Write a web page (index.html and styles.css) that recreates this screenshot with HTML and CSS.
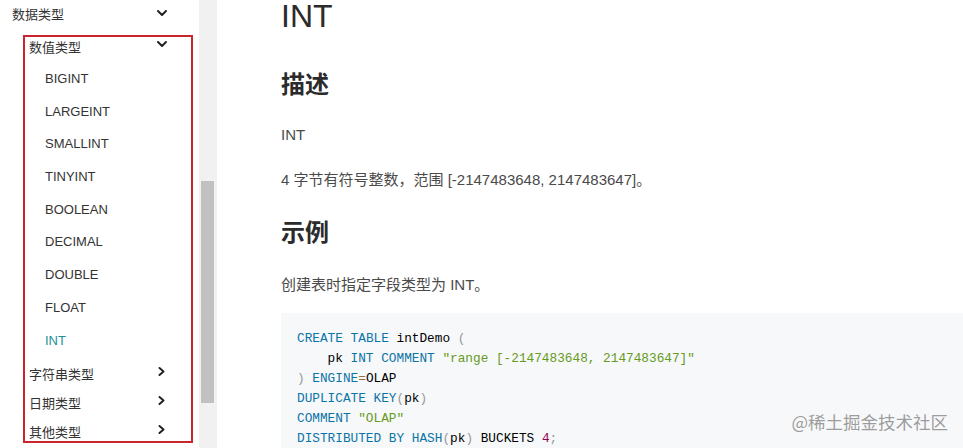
FILE: index.html
```html
<!DOCTYPE html>
<html lang="zh">
<head>
<meta charset="utf-8">
<title>INT</title>
<link rel="stylesheet" href="styles.css">
</head>
<body>
<div class="page">
  <aside class="sidebar">
    <div class="cat top"><span>数据类型</span>
      <svg class="chev-down" width="10" height="6" viewBox="0 0 10 6"><polyline points="1,1 5,5 9,1"/></svg>
    </div>
    <ul class="group">
      <li class="cat sub first"><span>数值类型</span>
        <svg class="chev-down" width="10" height="6" viewBox="0 0 10 6"><polyline points="1,1 5,5 9,1"/></svg>
      </li>
      <li class="leaf lead">BIGINT</li>
      <li class="leaf">LARGEINT</li>
      <li class="leaf">SMALLINT</li>
      <li class="leaf">TINYINT</li>
      <li class="leaf">BOOLEAN</li>
      <li class="leaf">DECIMAL</li>
      <li class="leaf">DOUBLE</li>
      <li class="leaf">FLOAT</li>
      <li class="leaf active">INT</li>
      <li class="cat sub closed after-leaf"><span>字符串类型</span>
        <svg class="chev-right" width="7" height="9" viewBox="0 0 7 9"><polyline points="1.5,1 5.5,4.5 1.5,8"/></svg>
      </li>
      <li class="cat sub closed"><span>日期类型</span>
        <svg class="chev-right" width="7" height="9" viewBox="0 0 7 9"><polyline points="1.5,1 5.5,4.5 1.5,8"/></svg>
      </li>
      <li class="cat sub closed"><span>其他类型</span>
        <svg class="chev-right" width="7" height="9" viewBox="0 0 7 9"><polyline points="1.5,1 5.5,4.5 1.5,8"/></svg>
      </li>
    </ul>
  </aside>
  <div class="scrollbar"><div class="thumb"></div></div>
  <main class="content">
    <h1 class="title">INT</h1>
    <h2 class="heading h-desc">描述</h2>
    <p class="para p-first">INT</p>
    <p class="para p-next">4 字节有符号整数，范围 [-2147483648, 2147483647]。</p>
    <h2 class="heading h-example">示例</h2>
    <p class="para p-example">创建表时指定字段类型为 INT。</p>
<pre class="code"><code><span class="kw">CREATE</span> <span class="kw">TABLE</span> intDemo <span class="pu">(</span>
    pk <span class="kw">INT</span> <span class="kw">COMMENT</span> <span class="st">"range [-2147483648, 2147483647]"</span>
<span class="pu">)</span> <span class="kw">ENGINE</span><span class="op">=</span>OLAP
<span class="kw">DUPLICATE</span> <span class="kw">KEY</span><span class="pu">(</span>pk<span class="pu">)</span>
<span class="kw">COMMENT</span> <span class="st">"OLAP"</span>
<span class="kw">DISTRIBUTED</span> <span class="kw">BY</span> <span class="kw">HASH</span><span class="pu">(</span>pk<span class="pu">)</span> BUCKETS <span class="nu">4</span><span class="pu">;</span></code></pre>
  </main>
  <div class="watermark">@稀土掘金技术社区</div>
</div>
</body>
</html>
```

FILE: styles.css
```css
* { box-sizing: border-box; }
html, body {
  margin: 0;
  padding: 0;
  height: 448px;
  overflow: hidden;
  background: #fff;
}
body {
  font-family: "Liberation Sans", "Noto Sans CJK SC", sans-serif;
  color: #333;
}
.page {
  position: relative;
  display: flex;
  height: 448px;
}

/* Sidebar */
.sidebar {
  width: 199px;
  flex: 0 0 199px;
  font-size: 13px;
  color: #333;
}
.cat {
  display: flex;
  align-items: center;
}
.cat svg { margin-left: auto; fill: none; stroke: #1f1f1f; stroke-width: 1.9; stroke-linecap: round; stroke-linejoin: round; }
.top {
  height: 27px;
  padding-left: 12px;
  padding-right: 32.5px;
}
.top svg { margin-top: -2px; }
.group {
  list-style: none;
  margin: 8px 0 0 23px;
  padding: 0;
  width: 170px;
  border: 2px solid #c9252f;
}
.sub {
  height: 20px;
  padding-left: 4px;
  padding-right: 24.5px;
}
.sub.first { height: 18px; }
.sub.first svg { margin-top: -4px; }
.sub.closed { padding-right: 26px; margin-top: 9px; }
.sub.closed svg { margin-top: -4px; }
.sub.after-leaf { margin-top: 6px; }
.leaf {
  height: 32.7px;
  line-height: 32.7px;
  padding-left: 20px;
}
.leaf.lead { margin-top: 8px; }
.leaf.active { color: #20909b; }

/* Scrollbar */
.scrollbar {
  flex: 0 0 18px;
  width: 18px;
  background: #f1f1f1;
  padding-top: 181px;
  padding-left: 2px;
}
.thumb {
  width: 13px;
  height: 222px;
  background: #c1c1c1;
}

/* Content */
.content {
  flex: 1;
  min-width: 0;
  padding-left: 64px;
  display: flex;
  flex-direction: column;
}
.title {
  margin: 0;
  font-size: 32px;
  line-height: 32px;
  font-weight: 400;
  color: #2b2b2b;
}
.heading {
  margin: 0;
  font-size: 24px;
  line-height: 32px;
  font-weight: 700;
  color: #2b2b2b;
}
.h-desc { margin-top: 37px; }
.h-example { margin-top: 24.5px; }
.para {
  margin: 0;
  font-size: 15px;
  line-height: 24px;
  color: #4a4a4a;
}
.p-first { margin-top: 21.5px; }
.p-next { margin-top: 21.5px; }
.p-example { margin-top: 24.5px; }

.code {
  margin: 16px 0 0 0;
  padding: 16px;
  background: #f6f8fa;
  font-family: "Liberation Mono", "DejaVu Sans Mono", monospace;
  font-size: 12.75px;
  line-height: 20px;
  color: #000;
  white-space: pre;
  flex: 1;
}
.code code { font-family: inherit; }
.kw { color: #0b74a6; }
.st { color: #679a1c; }
.pu { color: #999; }
.op { color: #9a6e3a; }
.nu { color: #990055; }

/* Watermark overlay */
.watermark {
  position: absolute;
  right: 15px;
  top: 410px;
  font-size: 17.5px;
  line-height: 24px;
  color: #9c9c9c;
  text-shadow: 0 0 1px #fff, 0 0 1px #fff;
  font-family: "Noto Sans CJK SC", sans-serif;
}
```
